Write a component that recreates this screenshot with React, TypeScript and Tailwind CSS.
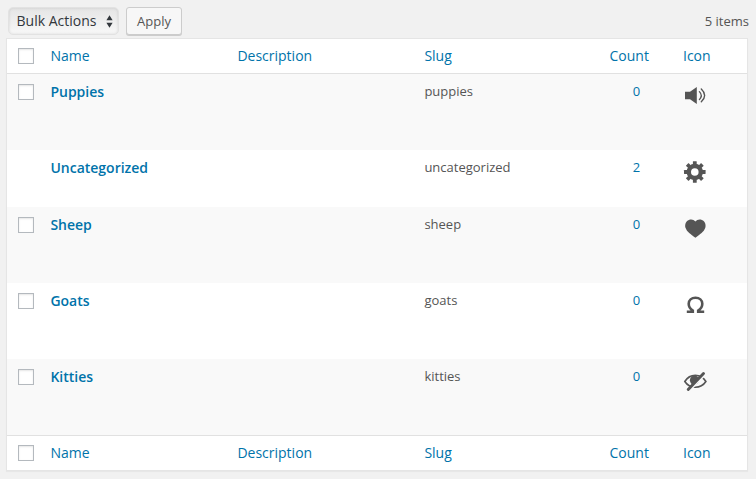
import React from 'react';

type IconName = 'speaker' | 'gear' | 'heart' | 'omega' | 'hidden';

type Term = {
  name: string;
  slug: string;
  count: number;
  icon: IconName;
  locked?: boolean;
};

const terms: Term[] = [
  { name: 'Puppies', slug: 'puppies', count: 0, icon: 'speaker' },
  { name: 'Uncategorized', slug: 'uncategorized', count: 2, icon: 'gear', locked: true },
  { name: 'Sheep', slug: 'sheep', count: 0, icon: 'heart' },
  { name: 'Goats', slug: 'goats', count: 0, icon: 'omega' },
  { name: 'Kitties', slug: 'kitties', count: 0, icon: 'hidden' },
];

const columns = 'grid grid-cols-[43.4px_187px_187px_185.6px_73px_1fr]';

function TermIcon({ name }: { name: IconName }) {
  return (
    <svg width="24" height="24" viewBox="0 0 24 24" fill="#555" className="block">
      {name === 'speaker' && (
        <>
          <path d="M2 7.8H7L13.8 3V20L7 15.2H2Z" />
          <g fill="none" stroke="#555" strokeLinecap="round">
            <path d="M16.4 7.6Q20.2 11.5 16.4 15.6" strokeWidth="1.3" />
            <path d="M18.3 5Q25 11.4 18.3 17.8" strokeWidth="1.4" />
          </g>
        </>
      )}
      {name === 'gear' && (
        <g transform="translate(11.8 12)">
          <circle r="6" fill="none" stroke="#555" strokeWidth="4.4" />
          {[0, 45, 90, 135, 180, 225, 270, 315].map((angle) => (
            <rect key={angle} x="-1.9" y="-10.8" width="3.8" height="4.5" rx="0.4" transform={`rotate(${angle})`} />
          ))}
        </g>
      )}
      {name === 'heart' && (
        <path d="M12.4 4.6C14 2.5 16.5 1.9 18.9 2.9C22.1 4.2 23.3 7.8 22.2 11C20.9 14.8 17.2 17.2 12.4 20.7C7.6 17.2 3.9 14.8 2.6 11C1.5 7.8 2.7 4.2 5.9 2.9C8.3 1.9 10.8 2.5 12.4 4.6Z" />
      )}
      {name === 'omega' && (
        <path
          d="M3.8 18.7H9.8V17.6C7.2 16 5.7 13.8 5.7 10.8C5.7 7.1 8.5 4.7 12.5 4.7S19.3 7.1 19.3 10.8C19.3 13.8 17.8 16 15.2 17.6V18.7H21.2"
          fill="none"
          stroke="#555"
          strokeWidth="2.6"
        />
      )}
      {name === 'hidden' && (
        <>
          <path
            d="M1.8 12.5C4.2 8.7 8 6.4 12.3 6.4C16.8 6.4 20.5 8.6 22.9 12.5C20.5 16.1 16.8 18.2 12.3 18.2C8 18.2 4.2 16.1 1.8 12.5Z"
            fill="none"
            stroke="#555"
            strokeWidth="1.6"
          />
          <circle cx="11.5" cy="11.2" r="4.6" />
          <path d="M6.1 21.6L22 5.3" stroke="#f9f9f9" strokeWidth="2.6" />
          <path d="M5.2 20.4L20.5 4.5" stroke="#555" strokeWidth="2.9" strokeLinecap="round" />
        </>
      )}
    </svg>
  );
}

function Checkbox() {
  return (
    <input
      type="checkbox"
      className="m-0 block size-4 appearance-none border border-[#b4b9be] bg-white shadow-[inset_0_1px_2px_rgba(0,0,0,0.1)]"
    />
  );
}

function HeadingRow({ edge }: { edge: string }) {
  return (
    <div className={`${columns} ${edge} h-[35px] border-[#e1e1e1] bg-white text-[14px] leading-[19px] text-[#0073aa]`}>
      <div className="pt-[9px] pl-[11px]"><Checkbox /></div>
      <a className="pt-[7px]">Name</a>
      <a className="pt-[7px]">Description</a>
      <a className="pt-[7px]">Slug</a>
      <a className="-ml-[0.5px] pt-[7px]">Count</a>
      <a className="pt-[7px]">Icon</a>
    </div>
  );
}

export default function App() {
  return (
    <div className="h-[479px] w-[756px] overflow-hidden bg-[#f1f1f1] pt-[7px] pl-[6px] font-['Open_Sans','Noto_Sans',sans-serif] text-[13px] leading-[19px] text-[#555]">
      <div className="flex h-[31px] w-[743px] items-start pl-[2px]">
        <button className="flex h-[28px] w-[111px] items-center justify-between rounded-[5px] border border-[#e2e2e2] bg-linear-to-b from-[#e5e5e5] to-[#f8f8f8] pr-[5px] pl-[7.5px] text-[14px] text-[#32373c] shadow-[inset_0_0_3px_rgba(0,0,0,0.12)]">
          <span className="pb-[2px]">Bulk Actions</span>
          <svg width="7" height="13" viewBox="0 0 7 13" fill="#32373c">
            <path d="M3.5 0.3L6.6 5.3H0.4ZM3.5 12.7L6.6 7.7H0.4Z" />
          </svg>
        </button>
        <button className="ml-[7px] h-[28px] w-[56px] rounded-[3px] border border-[#ccc] bg-[#f7f7f7] text-[13px] leading-[26px] text-[#555] shadow-[0_1px_0_#ccc]">
          Apply
        </button>
        <span className="ml-auto pt-[5px]">5 items</span>
      </div>

      <div className="w-[742px] border border-[#e5e5e5] bg-white shadow-[0_1px_1px_rgba(0,0,0,0.04)]">
        <HeadingRow edge="border-b" />
        {terms.map((term) => (
          <div
            key={term.name}
            className={`${columns} odd:bg-white even:bg-[#f9f9f9] ${term.locked ? 'h-[57px]' : 'h-[76px]'}`}
          >
            <div className="pt-[10px] pl-[11px]">{!term.locked && <Checkbox />}</div>
            <a className="pt-[8px] text-[14px] font-semibold text-[#0073aa]">{term.name}</a>
            <div />
            <div className="pt-[8px]">{term.slug}</div>
            <a className="w-[53px] pt-[8px] text-center text-[#0073aa]">{term.count}</a>
            <div className="pt-[10px]"><TermIcon name={term.icon} /></div>
          </div>
        ))}
        <HeadingRow edge="border-t" />
      </div>
    </div>
  );
}
